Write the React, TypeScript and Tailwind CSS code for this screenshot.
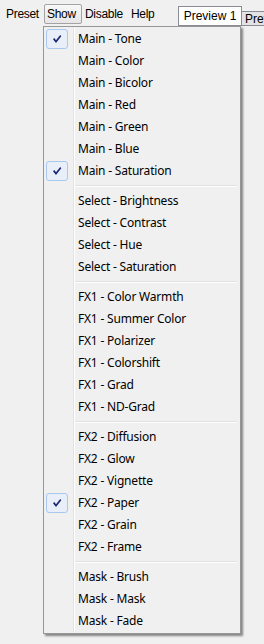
import React from 'react';

type Entry = { label: string; checked?: boolean } | 'sep';

const entries: Entry[] = [
  { label: 'Main - Tone', checked: true },
  { label: 'Main - Color' },
  { label: 'Main - Bicolor' },
  { label: 'Main - Red' },
  { label: 'Main - Green' },
  { label: 'Main - Blue' },
  { label: 'Main - Saturation', checked: true },
  'sep',
  { label: 'Select - Brightness' },
  { label: 'Select - Contrast' },
  { label: 'Select - Hue' },
  { label: 'Select - Saturation' },
  'sep',
  { label: 'FX1 - Color Warmth' },
  { label: 'FX1 - Summer Color' },
  { label: 'FX1 - Polarizer' },
  { label: 'FX1 - Colorshift' },
  { label: 'FX1 - Grad' },
  { label: 'FX1 - ND-Grad' },
  'sep',
  { label: 'FX2 - Diffusion' },
  { label: 'FX2 - Glow' },
  { label: 'FX2 - Vignette' },
  { label: 'FX2 - Paper', checked: true },
  { label: 'FX2 - Grain' },
  { label: 'FX2 - Frame' },
  'sep',
  { label: 'Mask - Brush' },
  { label: 'Mask - Mask' },
  { label: 'Mask - Fade' },
];

const CheckMark = () => (
  <svg width="10" height="10" viewBox="0 0 10 10">
    <path d="M1 5.2 L2.4 4 L4 6.2 L8.2 1 L9.3 2.2 L4 9 Z" fill="#1c2773" />
  </svg>
);

export default function App() {
  return (
    <div
      className="relative w-[264px] h-[644px] overflow-hidden bg-[#f0f0f0] text-black"
      style={{ fontFamily: '"Liberation Sans", Arial, sans-serif' }}
    >
      {/* Menu bar + tabs */}
      <div className="flex h-[26px] text-[12px] tracking-[-0.3px]">
        <div className="shrink-0 w-[44px] pl-[6px] pt-[4px] leading-[20px]">Preset</div>
        <div className="shrink-0 mt-[4px] h-[20px] w-[38px] pl-[2px] leading-[18px] border border-[#a3a3a3] rounded-[2px] bg-gradient-to-b from-[#f8f8f8] to-[#e6e6e6]">
          Show
        </div>
        <div className="shrink-0 w-[46px] pl-[3px] pt-[4px] leading-[20px]">Disable</div>
        <div className="shrink-0 w-[50px] pl-[3px] pt-[4px] leading-[20px]">Help</div>
        <div className="flex items-end shrink-0 border-b border-[#898c95]">
          <div className="shrink-0 h-[19px] w-[64px] bg-white border border-b-0 border-[#898c95] leading-[18px] text-center tracking-normal">
            Preview 1
          </div>
          <div className="shrink-0 w-[64px] h-[14px] pl-[3px] bg-[#e3e3e3] border border-b-0 border-l-0 border-[#898c95] leading-[14px] whitespace-nowrap tracking-normal">
            Preview 2
          </div>
        </div>
      </div>

      {/* Dropdown of "Show" */}
      <div
        className="absolute left-[43px] top-[26px] w-[198px] h-[608px] border border-[#979797] bg-[#f0f0f0] py-[1px] shadow-[2px_2px_2px_rgba(0,0,0,0.45)]"
        style={{ fontFamily: '"Noto Sans", "Open Sans", sans-serif' }}
      >
        <div className="absolute left-[29px] top-[1px] bottom-[1px] w-[1px] bg-[#e2e3e3]" />
        <div className="absolute left-[30px] top-[1px] bottom-[1px] w-[1px] bg-white" />
        {entries.map((e, i) =>
          e === 'sep' ? (
            <div key={i} className="h-[8px] pl-[31px] pr-[3px] pt-[3px]">
              <div className="h-[1px] bg-[#e0e0e0]" />
              <div className="h-[1px] bg-white" />
            </div>
          ) : (
            <div key={i} className="flex items-center h-[22px]">
              <div className="w-[34px] pl-[2px] flex items-center">
                {e.checked && (
                  <div className="w-[22px] h-[20px] rounded-[3px] border border-[#a8c8ee] bg-[#e8eff8] flex items-center justify-center">
                    <CheckMark />
                  </div>
                )}
              </div>
              <span className="text-[12px] leading-[22px] whitespace-nowrap tracking-[-0.2px]">{e.label}</span>
            </div>
          )
        )}
      </div>
    </div>
  );
}
